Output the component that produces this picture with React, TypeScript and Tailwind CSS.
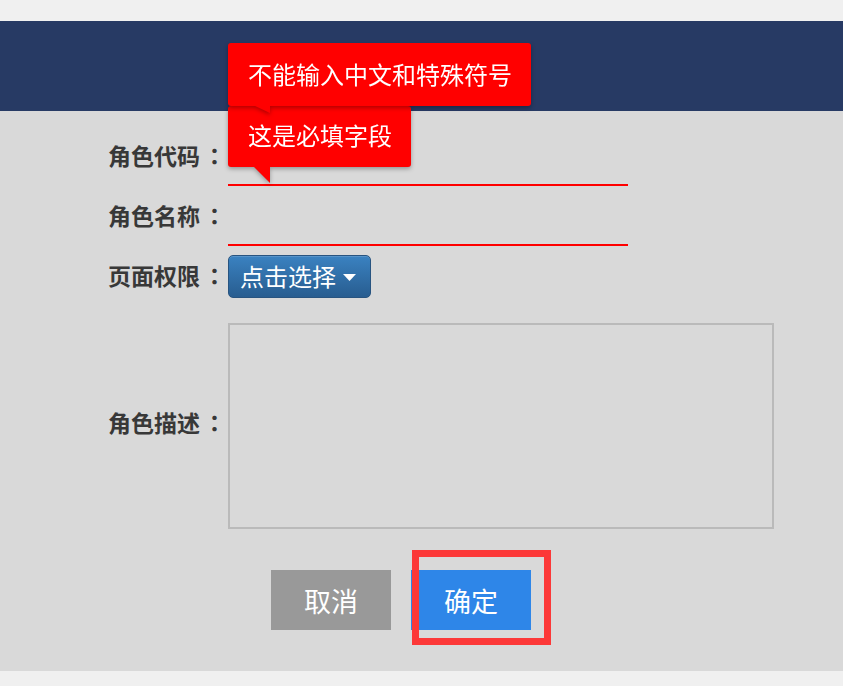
import React from "react";

const font = { fontFamily: '"Noto Sans CJK SC", "Noto Sans", sans-serif' };
const colonFont = { fontFamily: '"Noto Sans CJK TC", "Noto Sans", sans-serif' };

function Label({ text, extra = "" }: { text: string; extra?: string }) {
  return (
    <div className={`w-[120px] shrink-0 flex text-[23px] font-bold text-[#383838] leading-none ${extra}`}>
      <span>{text}</span>
      <span className="ml-[3px]" style={colonFont}>：</span>
    </div>
  );
}

export default function App() {
  return (
    <div className="w-[843px] h-[686px] bg-[#f0f0f0] flex flex-col relative overflow-hidden" style={font}>
      <div className="h-[21px] shrink-0" />
      <div className="h-[90px] shrink-0 bg-[#273a64]" />
      <div className="h-[560px] shrink-0 bg-[#d9d9d9] pl-[108px] pt-[19px] flex flex-col">
        {/* row 1 */}
        <div className="flex items-center h-[56px]">
          <Label text="角色代码" extra="pb-[6px]" />
          <div className="w-[400px] h-[56px] border-b-2 border-[#ff0000]" />
        </div>
        {/* row 2 */}
        <div className="flex items-center h-[56px] mt-[4px]">
          <Label text="角色名称" extra="pb-[6px]" />
          <div className="w-[400px] h-[56px] border-b-2 border-[#ff0000]" />
        </div>
        {/* row 3 */}
        <div className="flex items-center h-[43px] mt-[9px]">
          <Label text="页面权限" extra="pb-[2px]" />
          <button className="h-[43px] w-[143px] rounded-[5px] border border-[#285480] bg-gradient-to-b from-[#3a82c1] to-[#285d90] text-white text-[24px] flex items-center pl-[11px] gap-[7px] leading-none pb-[2px] shadow-[inset_0_1px_0_rgba(255,255,255,0.15)]">
            <span>点击选择</span>
            <svg width="13" height="7" viewBox="0 0 13 7" className="mt-[3px]">
              <polygon points="0,0 13,0 6.5,7" fill="#ffffff" />
            </svg>
          </button>
        </div>
        {/* row 4 */}
        <div className="flex items-center mt-[25px]">
          <Label text="角色描述" extra="pb-[8px]" />
          <div className="w-[546px] h-[206px] border-2 border-[#bababa] bg-[#d9d9d9]" />
        </div>
        {/* buttons */}
        <div className="flex ml-[163px] mt-[41px] gap-[20px]">
          <button className="w-[120px] h-[60px] bg-[#999999] text-white text-[27px] flex items-center justify-center leading-none">取消</button>
          <div className="relative">
            <button className="w-[120px] h-[60px] bg-[#2e86e8] text-white text-[27px] flex items-center justify-center leading-none">确定</button>
            <div className="absolute left-[1px] top-[-20px] w-[139px] h-[95px] border-[7px] border-[#fc3838]" />
          </div>
        </div>
      </div>
      <div className="flex-1" />

      {/* tooltip 2 (below) */}
      <div className="absolute left-[228px] top-[106px] drop-shadow-[0_2px_2px_rgba(0,0,0,0.3)]">
        <div className="h-[61px] w-[183px] bg-[#ff0000] rounded-[3px] flex items-center pl-[20px] text-white text-[24px] leading-none pb-[3px]">
          这是必填字段
        </div>
        <svg width="17" height="17" viewBox="0 0 17 17" className="absolute left-[25px] top-[60px]">
          <polygon points="0,0 17,0 17,17" fill="#ff0000" />
        </svg>
      </div>

      {/* tooltip 1 (on top) */}
      <div className="absolute left-[228px] top-[43px] drop-shadow-[0_2px_2px_rgba(0,0,0,0.3)]">
        <div className="h-[63px] w-[303px] bg-[#ff0000] rounded-[3px] flex items-center pl-[20px] text-white text-[24px] leading-none pb-[1px]">
          不能输入中文和特殊符号
        </div>
        <svg width="17" height="8" viewBox="0 0 17 8" className="absolute left-[25px] top-[62px]">
          <polygon points="0,0 17,0 17,8" fill="#ff0000" />
        </svg>
      </div>
    </div>
  );
}
